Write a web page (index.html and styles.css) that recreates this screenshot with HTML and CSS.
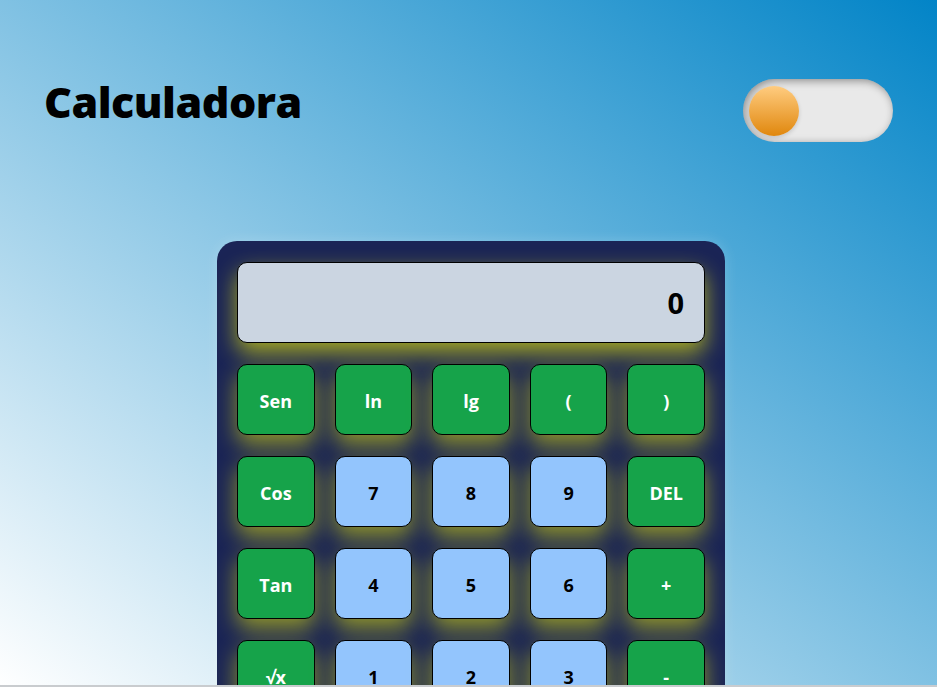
FILE: index.html
```html
<!DOCTYPE html>
<html lang="es">
<head>
<meta charset="utf-8">
<title>Calculadora</title>
<link rel="stylesheet" href="styles.css">
</head>
<body>
<header class="header">
  <h1 class="title">Calculadora</h1>
  <div class="toggle"><span class="knob"></span></div>
</header>
<main class="main">
  <div class="calc">
    <div class="display">0</div>
    <div class="keys">
      <button class="key fn">Sen</button>
      <button class="key fn">ln</button>
      <button class="key fn">lg</button>
      <button class="key fn">(</button>
      <button class="key fn">)</button>
      <button class="key fn">Cos</button>
      <button class="key num">7</button>
      <button class="key num">8</button>
      <button class="key num">9</button>
      <button class="key fn">DEL</button>
      <button class="key fn">Tan</button>
      <button class="key num">4</button>
      <button class="key num">5</button>
      <button class="key num">6</button>
      <button class="key fn">+</button>
      <button class="key fn">√x</button>
      <button class="key num">1</button>
      <button class="key num">2</button>
      <button class="key num">3</button>
      <button class="key fn">-</button>
      <button class="key fn">x²</button>
      <button class="key num">0</button>
      <button class="key num">.</button>
      <button class="key fn">=</button>
      <button class="key fn">*</button>
    </div>
  </div>
</main>
<div class="bottom-line"></div>
</body>
</html>
```

FILE: styles.css
```css
html, body {
  margin: 0;
  padding: 0;
}
body {
  font-family: "Open Sans", "Noto Sans", sans-serif;
  background: linear-gradient(to top right, #ffffff 0%, #0284c7 100%);
  overflow: hidden;
  height: 687px;
}
.header {
  display: flex;
  justify-content: space-between;
  align-items: flex-start;
  padding: 0 44px 0 44px;
}
.title {
  margin: 72px 0 0 0;
  font-size: 43px;
  font-weight: 800;
  line-height: 60px;
  color: #000;
  letter-spacing: -0.5px;
}
.toggle {
  margin-top: 79px;
  width: 150px;
  height: 63px;
  border-radius: 32px;
  background: #e9e9e9;
  box-shadow: inset 2px 2px 9px rgba(0, 0, 0, 0.4);
  display: flex;
  align-items: center;
  padding-left: 6px;
  box-sizing: border-box;
}
.knob {
  width: 50px;
  height: 50px;
  border-radius: 50%;
  background: linear-gradient(to bottom, #ffcc80, #e0870d);
  box-shadow: 0 2px 4px rgba(0, 0, 0, 0.15);
}
.main {
  display: flex;
  justify-content: center;
  padding-left: 5px;
  margin-top: 99px;
}
.calc {
  width: 508px;
  box-sizing: border-box;
  padding: 21px 20px 20px;
  background: #1a2456;
  border-radius: 20px;
  box-shadow: 0 0 14px rgba(255, 255, 255, 0.18);
}
.display {
  height: 81px;
  box-sizing: border-box;
  background: #cbd5e1;
  border: 1px solid #000;
  border-radius: 10px;
  display: flex;
  align-items: center;
  justify-content: flex-end;
  padding-right: 20px;
  font-size: 29px;
  font-weight: 700;
  color: #000;
  box-shadow: 0 10px 22px rgba(255, 255, 0, 0.6);
}
.keys {
  margin-top: 21px;
  display: grid;
  grid-template-columns: repeat(5, 1fr);
  column-gap: 20px;
  row-gap: 21px;
}
.key {
  height: 71px;
  border: 1px solid #000;
  border-radius: 10px;
  font-family: "Open Sans", "Noto Sans", sans-serif;
  font-size: 18px;
  font-weight: 700;
  box-shadow: 0 10px 22px rgba(255, 255, 0, 0.5);
  padding: 3px 0 0 0;
}
.fn {
  background: #16a34a;
  color: #fff;
}
.num {
  background: #93c5fd;
  color: #000;
}
.bottom-line {
  position: fixed;
  left: 0;
  right: 0;
  bottom: 0;
  height: 2px;
  background: #c9cccf;
}
```
